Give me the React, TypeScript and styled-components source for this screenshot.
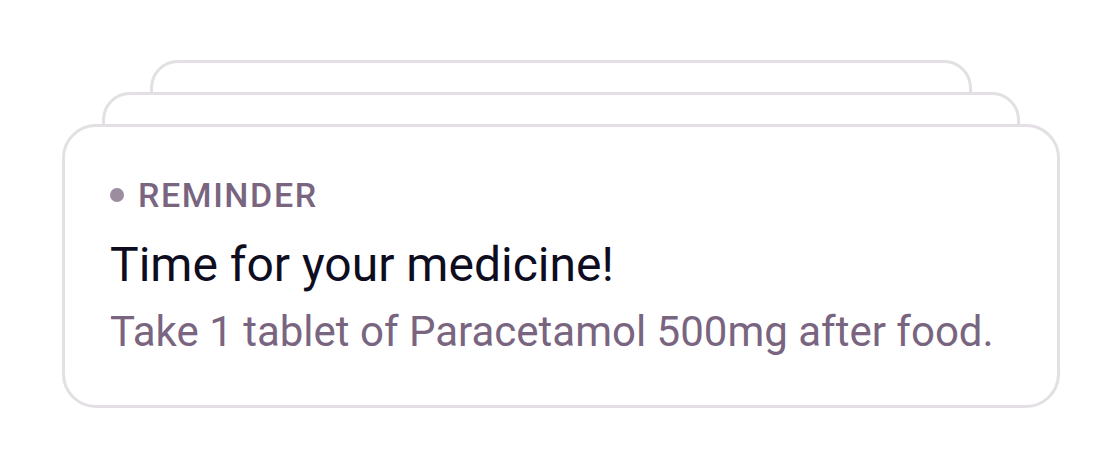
import React from "react";
import styled, { createGlobalStyle } from "styled-components";

const Global = createGlobalStyle`
  html, body { margin: 0; padding: 0; background: #ffffff; }
  body { font-family: Roboto, "Noto Sans", "Liberation Sans", sans-serif; }
`;

const Stage = styled.div`
  width: 1120px;
  height: 476px;
  box-sizing: border-box;
  padding-top: 60px;
`;

const Stack = styled.div`
  display: grid;
  grid-template-columns: 1fr;
  grid-template-rows: auto;
`;

const BackCard = styled.div<{ $top: number; $left: number; $right: number }>`
  grid-area: 1 / 1;
  align-self: start;
  box-sizing: border-box;
  height: 180px;
  margin: ${(p) => p.$top}px ${(p) => p.$right}px 0 ${(p) => p.$left}px;
  background: #ffffff;
  border: 3px solid #e3dfe4;
  border-radius: 28px;
`;

const FrontCard = styled.div`
  grid-area: 1 / 1;
  position: relative;
  z-index: 1;
  box-sizing: border-box;
  height: 284px;
  margin: 64px 60px 0 62px;
  background: #ffffff;
  border: 3px solid #e3dfe4;
  border-radius: 34px;
  padding: 48px 45px 0 45px;
  display: flex;
  flex-direction: column;
`;

const Label = styled.div`
  display: flex;
  align-items: center;
  gap: 14px;
  font-size: 34px;
  line-height: 40px;
  font-weight: 500;
  letter-spacing: 1.6px;
  color: #79657f;
`;

const Dot = styled.span`
  width: 14px;
  height: 14px;
  border-radius: 50%;
  background: #9c8ca0;
  flex: none;
`;

const Title = styled.div`
  margin-top: 22px;
  font-size: 48px;
  line-height: 56px;
  font-weight: 400;
  color: #0e0d1f;
`;

const Body = styled.div`
  margin-top: 14px;
  font-size: 42px;
  line-height: 50px;
  font-weight: 400;
  color: #79657f;
`;

export default function App() {
  return (
    <>
      <Global />
      <Stage>
        <Stack>
          <BackCard $top={0} $left={150} $right={148} />
          <BackCard $top={32} $left={102} $right={100} />
          <FrontCard>
            <Label>
              <Dot />
              REMINDER
            </Label>
            <Title>Time for your medicine!</Title>
            <Body>Take 1 tablet of Paracetamol 500mg after food.</Body>
          </FrontCard>
        </Stack>
      </Stage>
    </>
  );
}
